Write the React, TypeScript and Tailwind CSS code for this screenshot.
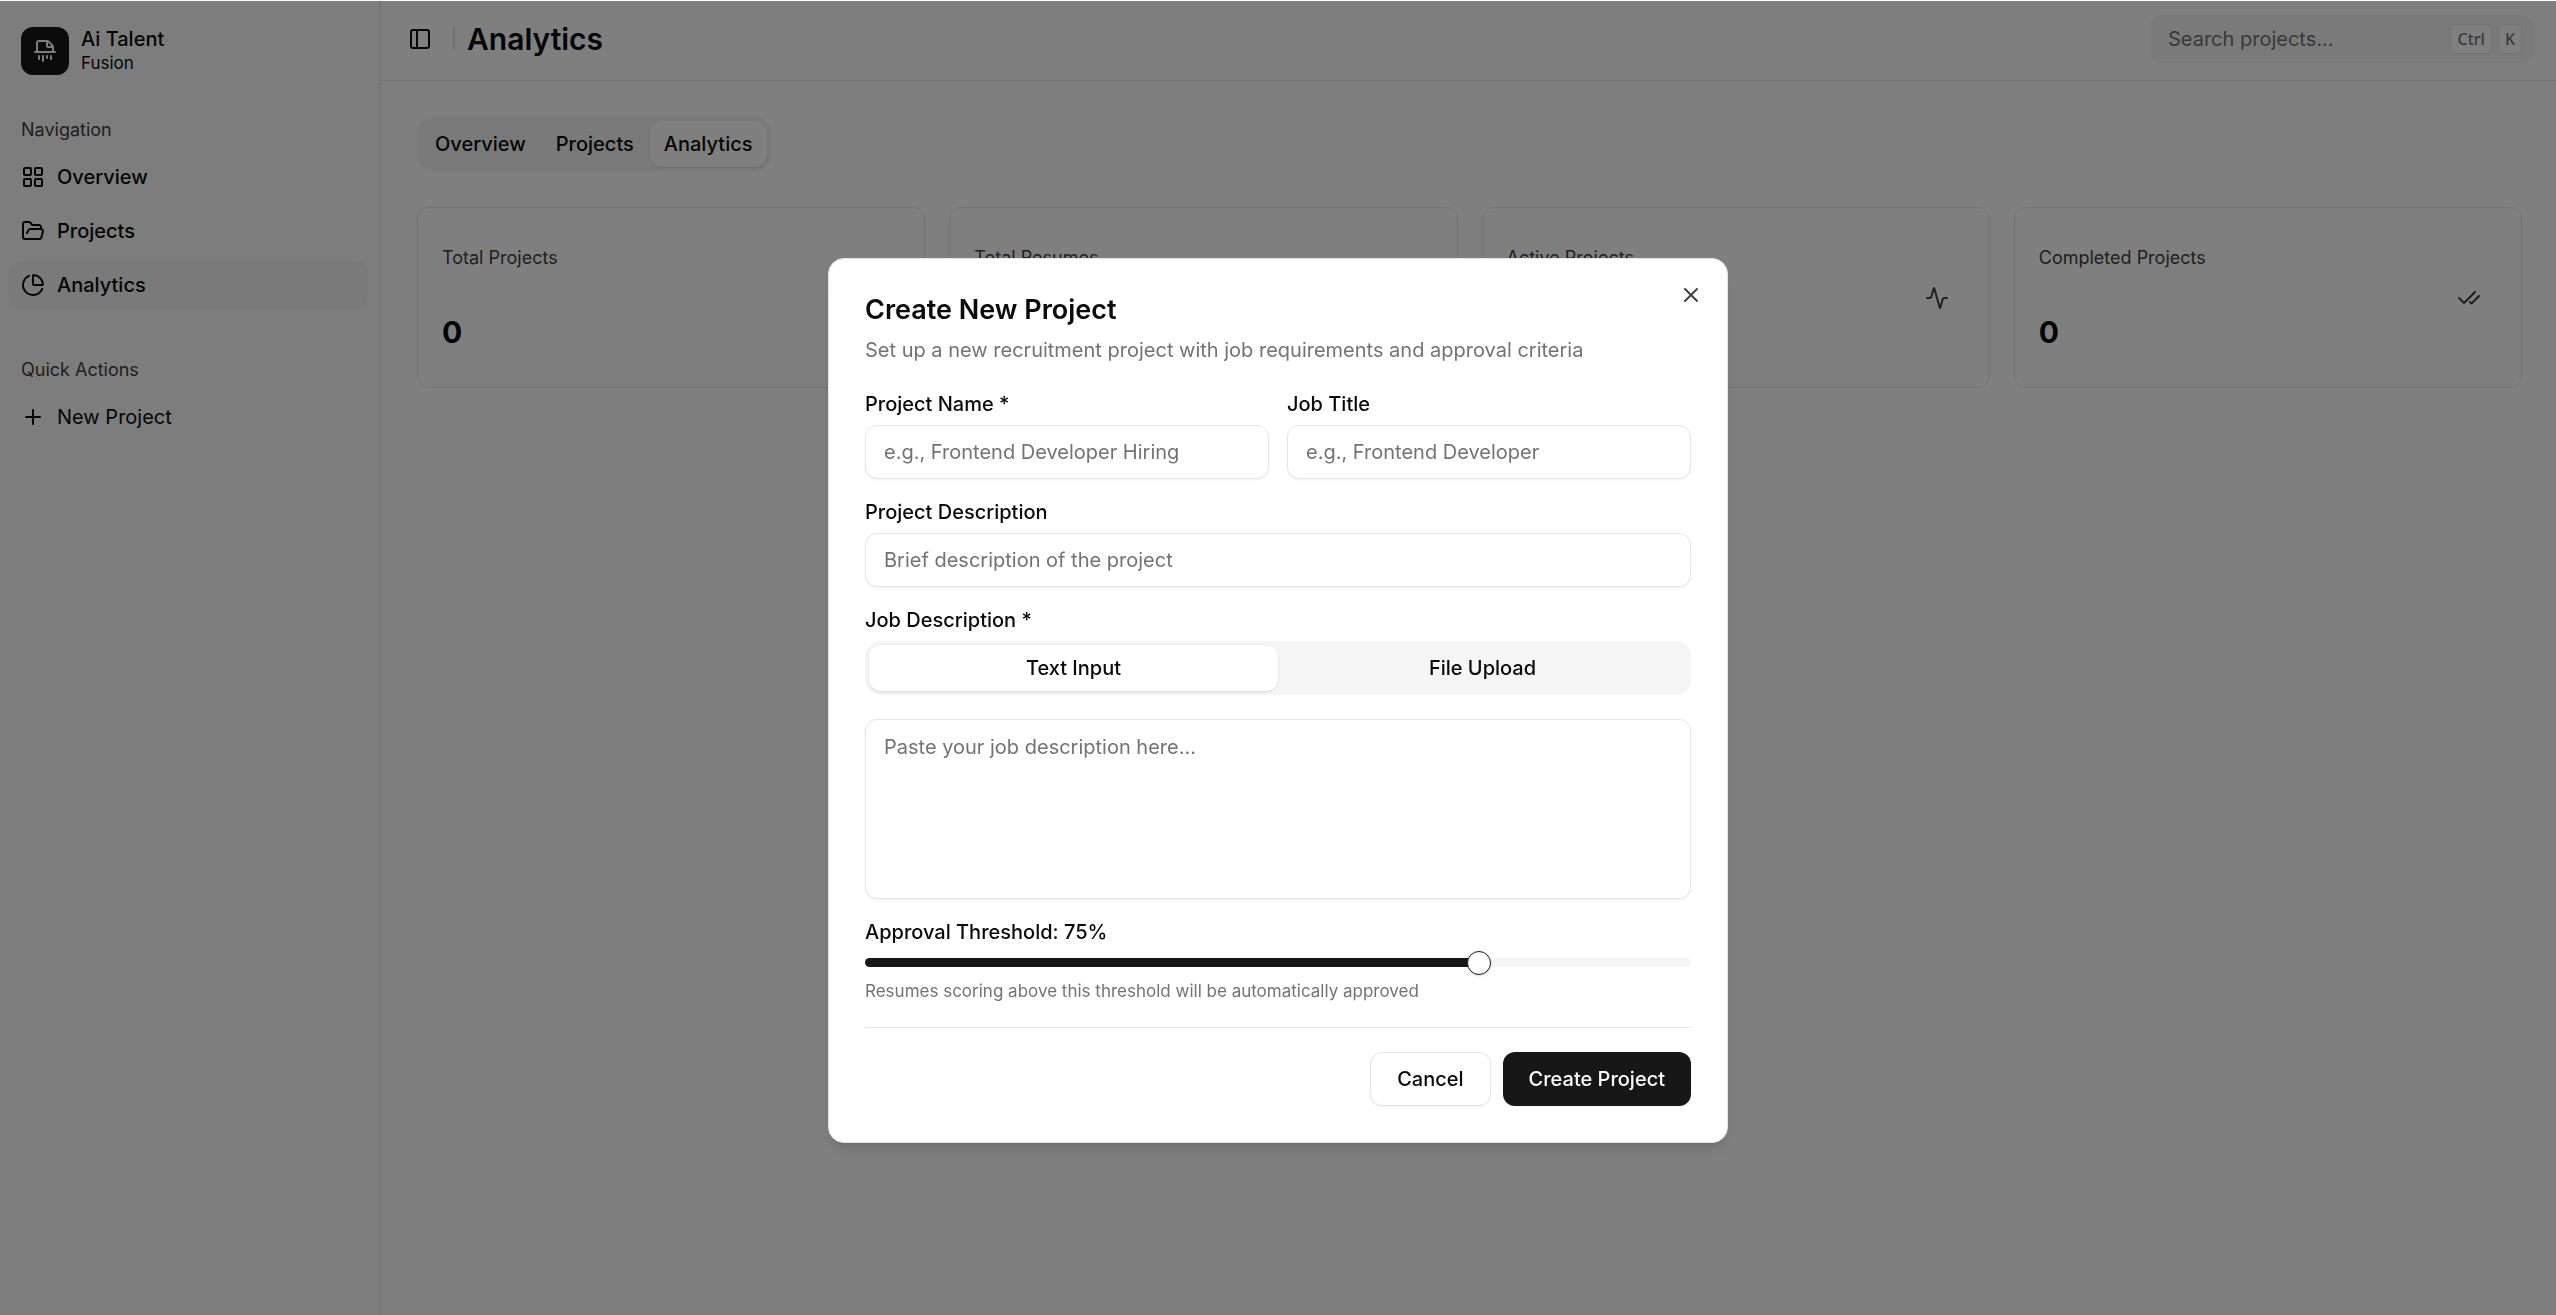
import {
  Activity,
  CheckCheck,
  ChartPie,
  FileText,
  FolderOpen,
  Folders,
  LayoutGrid,
  PanelLeft,
  Plus,
  Shredder,
  X,
  type LucideIcon,
} from "lucide-react";
import clsx from "clsx";
import { useState } from "react";

type NavItem = { label: string; icon: LucideIcon };

const navItems: NavItem[] = [
  { label: "Overview", icon: LayoutGrid },
  { label: "Projects", icon: FolderOpen },
  { label: "Analytics", icon: ChartPie },
];

const stats = [
  { label: "Total Projects", value: 0, icon: Folders },
  { label: "Total Resumes", value: 0, icon: FileText },
  { label: "Active Projects", value: 0, icon: Activity },
  { label: "Completed Projects", value: 0, icon: CheckCheck },
];

const fieldClass =
  "w-full rounded-xl border border-[#e5e5e5] bg-white px-[18px] text-[20px] shadow-xs outline-none placeholder:text-[#737373]";

const kbdClass =
  "flex h-[30px] items-center rounded-md border border-[#e5e5e5] bg-white px-[6px] font-['Noto_Sans',sans-serif] text-[16px] font-medium text-[#737373]";

function Sidebar() {
  return (
    <aside className="flex w-[381px] shrink-0 flex-col border-r border-[#e5e5e5] bg-[#fafafa] pr-3 pl-[9px]">
      <a href="#" className="flex items-center gap-3 px-3 pt-[27px]">
        <span className="flex size-12 items-center justify-center rounded-xl bg-[#171717] text-[#fafafa]">
          <Shredder size={24} />
        </span>
        <span className="flex flex-col">
          <span className="text-[20px] leading-6 font-medium">Ai Talent</span>
          <span className="text-[17px] leading-6">Fusion</span>
        </span>
      </a>

      <nav aria-label="Navigation">
        <h2 className="mt-[30px] flex h-12 items-center px-3 text-[18px] text-[#404040]">
          Navigation
        </h2>
        <ul className="flex flex-col gap-[6px]">
          {navItems.map(({ label, icon: Icon }) => (
            <li key={label}>
              <a
                href="#"
                className={clsx(
                  "flex h-12 items-center gap-3 rounded-xl px-3 text-[20px] font-medium",
                  label === "Analytics" && "bg-[#f5f5f5]",
                )}
              >
                <Icon size={24} />
                {label}
              </a>
            </li>
          ))}
        </ul>
      </nav>

      <section>
        <h2 className="mt-9 flex h-12 items-center px-3 text-[18px] text-[#404040]">
          Quick Actions
        </h2>
        <button
          type="button"
          className="flex h-12 w-full items-center gap-3 rounded-xl px-3 text-[20px]"
        >
          <Plus size={24} />
          New Project
        </button>
      </section>
    </aside>
  );
}

function Header() {
  return (
    <header className="flex h-[81px] items-center border-b border-[#e5e5e5] pr-[22px] pb-[2px] pl-[27px]">
      <button type="button" aria-label="Toggle sidebar" className="pr-[21px]">
        <PanelLeft size={24} />
      </button>
      <div className="h-6 w-[2px] bg-[#e5e5e5]" />
      <h1 className="pl-3 text-[30px] font-semibold">Analytics</h1>
      <label className="ml-auto flex h-12 w-[384px] items-center gap-[6px] rounded-xl bg-[#f5f5f5] pr-3 pl-[18px]">
        <input
          type="search"
          aria-label="Search projects"
          placeholder="Search projects..."
          className="min-w-0 flex-1 bg-transparent text-[20px] outline-none placeholder:text-[#737373]"
        />
        <kbd className={kbdClass}>Ctrl</kbd>
        <kbd className={kbdClass}>K</kbd>
      </label>
    </header>
  );
}

function Dashboard() {
  return (
    <main className="flex flex-col gap-9 py-9 pr-[34px] pl-9">
      <div
        role="tablist"
        className="flex h-[54px] gap-[2px] self-start rounded-2xl bg-[#f5f5f5] p-1"
      >
        {navItems.map(({ label }) => (
          <button
            key={label}
            type="button"
            role="tab"
            aria-selected={label === "Analytics"}
            className="rounded-xl px-[14px] text-[20px] font-medium aria-selected:bg-white aria-selected:shadow-sm"
          >
            {label}
          </button>
        ))}
      </div>

      <div className="grid grid-cols-4 gap-6">
        {stats.map(({ label, value, icon: Icon }) => (
          <section
            key={label}
            className="flex h-[181px] items-center justify-between rounded-xl border border-[#e5e5e5] bg-white pr-10 pl-6"
          >
            <div className="flex flex-col gap-11">
              <h3 className="text-[18px] leading-6 text-[#404040]">{label}</h3>
              <p className="text-[30px] leading-9 font-bold">{value}</p>
            </div>
            <Icon size={24} className="text-[#404040]" />
          </section>
        ))}
      </div>
    </main>
  );
}

function CreateProjectDialog() {
  const [threshold, setThreshold] = useState(75);
  const [mode, setMode] = useState("Text Input");

  return (
    <div className="fixed inset-0 top-px flex items-start justify-center overflow-hidden bg-black/50 pt-[257px]">
      <form
        role="dialog"
        aria-labelledby="dialog-title"
        className="relative flex w-[900px] flex-col rounded-2xl border border-[#e5e5e5] bg-white p-9 shadow-lg"
      >
        <button
          type="button"
          aria-label="Close"
          className="absolute top-6 right-6 text-[#404040]"
        >
          <X size={24} />
        </button>

        <h2 id="dialog-title" className="text-[27px] leading-[30px] font-semibold">
          Create New Project
        </h2>
        <p className="mt-[10px] text-[20px] leading-[30px] text-[#737373]">
          Set up a new recruitment project with job requirements and approval criteria
        </p>

        <div className="mt-6 grid grid-cols-2 gap-[18px]">
          <div className="flex flex-col gap-[6px]">
            <label htmlFor="name" className="text-[20px] leading-[30px] font-medium">
              Project Name *
            </label>
            <input
              id="name"
              placeholder="e.g., Frontend Developer Hiring"
              className={clsx(fieldClass, "h-[54px]")}
            />
          </div>
          <div className="flex flex-col gap-[6px]">
            <label htmlFor="title" className="text-[20px] leading-[30px] font-medium">
              Job Title
            </label>
            <input
              id="title"
              placeholder="e.g., Frontend Developer"
              className={clsx(fieldClass, "h-[54px]")}
            />
          </div>
        </div>

        <div className="mt-[18px] flex flex-col gap-[6px]">
          <label htmlFor="summary" className="text-[20px] leading-[30px] font-medium">
            Project Description
          </label>
          <input
            id="summary"
            placeholder="Brief description of the project"
            className={clsx(fieldClass, "h-[54px]")}
          />
        </div>

        <div className="mt-[18px] flex flex-col gap-[6px]">
          <label htmlFor="description" className="text-[20px] leading-[30px] font-medium">
            Job Description *
          </label>
          <div role="tablist" className="grid h-[54px] grid-cols-2 rounded-2xl bg-[#f5f5f5] p-1">
            {["Text Input", "File Upload"].map((m) => (
              <button
                key={m}
                type="button"
                role="tab"
                aria-selected={mode === m}
                onClick={() => setMode(m)}
                className="rounded-xl text-[20px] font-medium aria-selected:bg-white aria-selected:shadow-sm"
              >
                {m}
              </button>
            ))}
          </div>
          <textarea
            id="description"
            placeholder="Paste your job description here..."
            className={clsx(fieldClass, "mt-[18px] h-[180px] resize-none py-3 leading-[30px]")}
          />
        </div>

        <label htmlFor="threshold" className="mt-[18px] text-[20px] leading-[30px] font-medium">
          Approval Threshold: {threshold}%
        </label>
        <input
          id="threshold"
          type="range"
          value={threshold}
          onChange={(e) => setThreshold(Number(e.target.value))}
          style={{
            backgroundImage: `linear-gradient(to right, #171717 ${threshold}%, #f5f5f5 ${threshold}%)`,
          }}
          className="mt-[11px] h-[9px] appearance-none rounded-full [&::-webkit-slider-thumb]:size-6 [&::-webkit-slider-thumb]:appearance-none [&::-webkit-slider-thumb]:rounded-full [&::-webkit-slider-thumb]:border [&::-webkit-slider-thumb]:border-[#171717] [&::-webkit-slider-thumb]:bg-white [&::-webkit-slider-thumb]:shadow-sm"
        />
        <p className="mt-3 text-[17px] leading-6 text-[#737373]">
          Resumes scoring above this threshold will be automatically approved
        </p>

        <div className="mt-6 flex justify-end gap-3 border-t border-[#e5e5e5] pt-6">
          <button
            type="button"
            className="h-[54px] rounded-xl border border-[#e5e5e5] bg-white px-[26px] text-[20px] font-medium shadow-xs"
          >
            Cancel
          </button>
          <button
            type="submit"
            className="h-[54px] rounded-xl bg-[#171717] px-[26px] text-[20px] font-medium text-[#fafafa] shadow-xs"
          >
            Create Project
          </button>
        </div>
      </form>
    </div>
  );
}

export default function App() {
  return (
    <div className="flex min-h-screen bg-white font-['Inter',sans-serif] text-[#0a0a0a]">
      <Sidebar />
      <div className="flex min-w-0 flex-1 flex-col">
        <Header />
        <Dashboard />
      </div>
      <CreateProjectDialog />
    </div>
  );
}
